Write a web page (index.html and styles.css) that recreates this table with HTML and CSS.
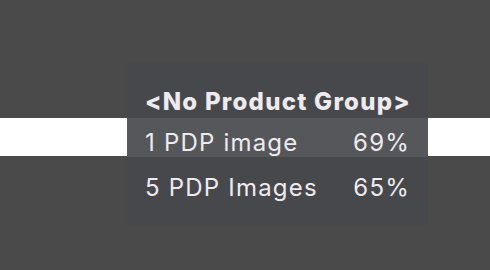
FILE: index.html
```html
<!DOCTYPE html>
<html lang="en">
<head>
  <meta charset="utf-8" />
  <title>Product groups</title>
  <link rel="stylesheet" href="styles.css">
</head>
<body>
  <div class="canvas">
    <div class="strip"></div>

    <div class="tooltip">
      <div class="tip-title">&lt;No Product Group&gt;</div>
      <ul class="tip-rows">
        <li class="active"><span>1 PDP image</span><span>69%</span></li>
        <li><span>5 PDP Images</span><span>65%</span></li>
      </ul>
    </div>
  </div>
</body>
</html>
```

FILE: styles.css
```css
body {
  margin: 0;
  background: #4a4a4a;
  font-family: Inter, 'Noto Sans', sans-serif;
  color: #eeeaf0;
}

.canvas {
  position: relative;
  height: 270px;
  padding-top: 118px;
  box-sizing: border-box;
}

.strip {
  height: 38px;
  background: #ffffff;
}

/* hover card sits over the chart strip */
.tooltip {
  position: absolute;
  left: 127px;
  top: 63px;
  width: 301px;
  height: 162px;
  background: #47484b;
  border-radius: 3px;
  box-sizing: border-box;
  padding-top: 25px;
  font-size: 24px;
  letter-spacing: 1.2px;
}

.tip-title {
  font-weight: 800;
  letter-spacing: 1.25px;
  line-height: 28px;
  padding: 0 10px 0 18px;
  margin-bottom: 2px;
  white-space: nowrap;
}

.tip-rows {
  list-style: none;
  margin: 0;
  padding: 0;
}

.tip-rows li {
  display: flex;
  justify-content: space-between;
  line-height: 29px;
  padding: 10px 18px 0;
}

.tip-rows li + li {
  margin-top: 6px;
}

.tip-rows li.active {
  background: #56575b;
}
```
